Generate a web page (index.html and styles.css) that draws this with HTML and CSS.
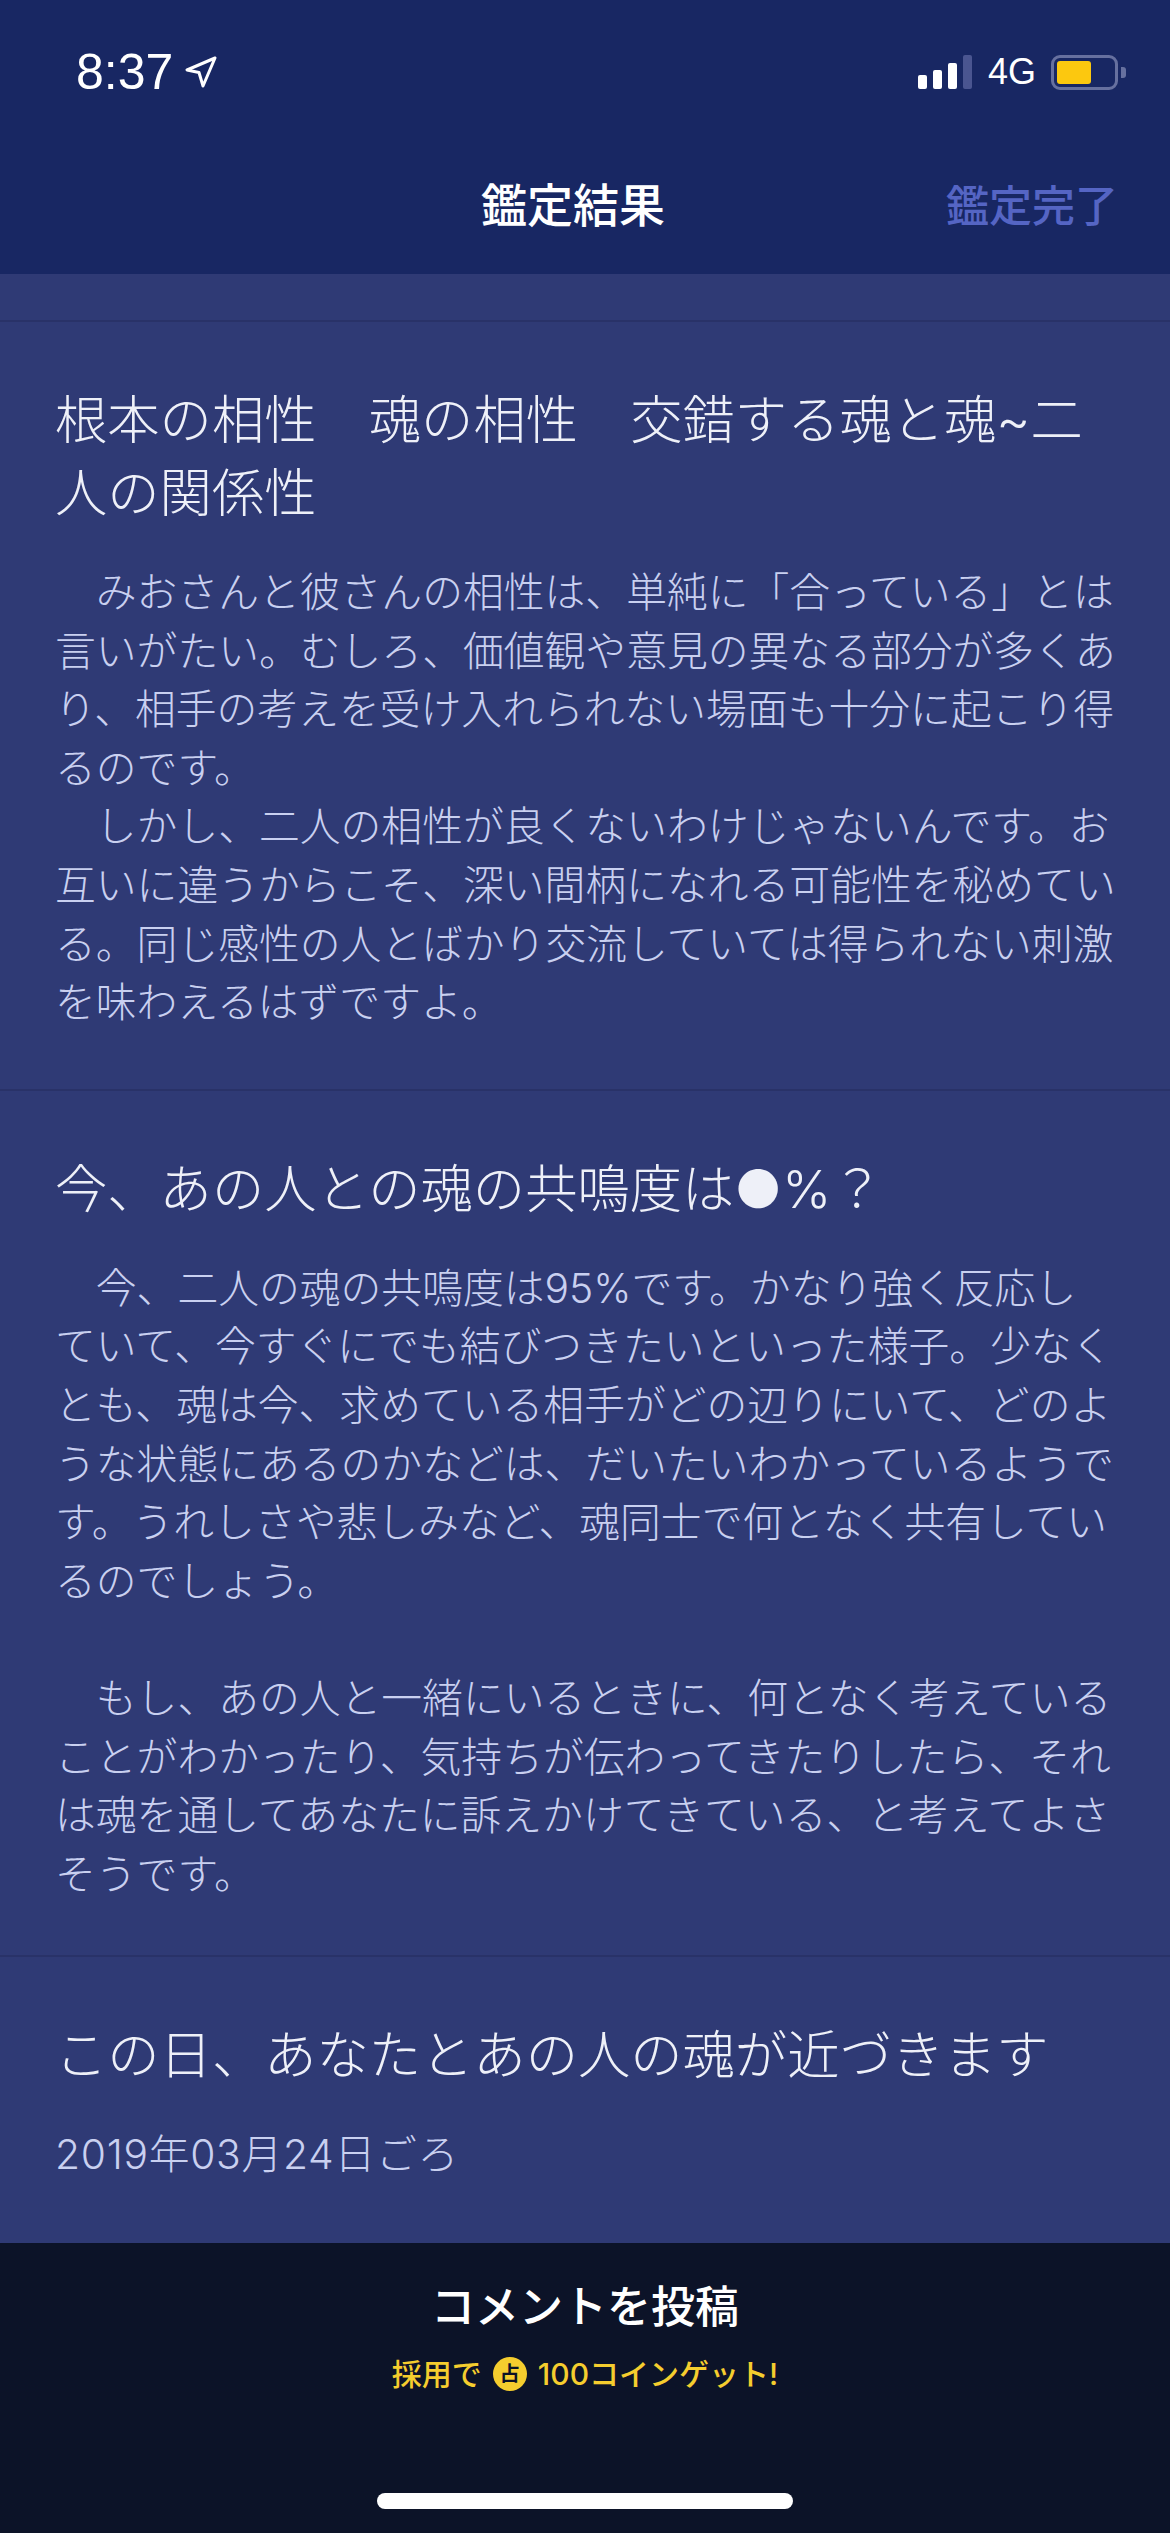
FILE: index.html
```html
<!DOCTYPE html>
<html lang="ja">
<head>
    <meta charset="UTF-8">
    <meta name="viewport" content="width=device-width, initial-scale=1.0">
    <title>鑑定結果</title>
    <link rel="stylesheet" href="styles.css">
</head>
<body>
    <div class="screen">
        <header class="top">
            <div class="status">
                <div class="status-left">
                    <span class="time">8:37</span>
                    <svg class="loc" width="32" height="32" viewBox="0 0 32 32">
                        <path d="M30 2 L2 14 L14 16.500 L18 30 Z" fill="none" stroke="#ffffff" stroke-width="3" stroke-linejoin="round"/>
                    </svg>
                </div>
                <div class="status-right">
                    <div class="bars">
                        <span class="bar bar-1"></span>
                        <span class="bar bar-2"></span>
                        <span class="bar bar-3"></span>
                        <span class="bar bar-4"></span>
                    </div>
                    <span class="net">4G</span>
                    <div class="battery">
                        <div class="battery-body"><span class="battery-level"></span></div>
                        <span class="battery-cap"></span>
                    </div>
                </div>
            </div>
            <div class="nav">
                <h1 class="nav-title">鑑定結果</h1>
                <span class="nav-done">鑑定完了</span>
            </div>
        </header>

        <main class="result">
            <section class="block">
                <h2 class="block-title">根本の相性　魂の相性　交錯する魂と魂~二<br>人の関係性</h2>
                <p class="block-text">　みおさんと彼さんの相性は、単純に「合っている」とは<br>言いがたい。むしろ、価値観や意見の異なる部分が多くあ<br>り、相手の考えを受け入れられない場面も十分に起こり得<br>るのです。<br>　しかし、二人の相性が良くないわけじゃないんです。お<br>互いに違うからこそ、深い間柄になれる可能性を秘めてい<br>る。同じ感性の人とばかり交流していては得られない刺激<br>を味わえるはずですよ。</p>
            </section>
            <section class="block">
                <h2 class="block-title">今、あの人との魂の共鳴度は●%？</h2>
                <p class="block-text">　今、二人の魂の共鳴度は95%です。かなり強く反応し<br>ていて、今すぐにでも結びつきたいといった様子。少なく<br>とも、魂は今、求めている相手がどの辺りにいて、どのよ<br>うな状態にあるのかなどは、だいたいわかっているようで<br>す。うれしさや悲しみなど、魂同士で何となく共有してい<br>るのでしょう。<br><br>　もし、あの人と一緒にいるときに、何となく考えている<br>ことがわかったり、気持ちが伝わってきたりしたら、それ<br>は魂を通してあなたに訴えかけてきている、と考えてよさ<br>そうです。</p>
            </section>
            <section class="block">
                <h2 class="block-title">この日、あなたとあの人の魂が近づきます</h2>
                <p class="block-text block-date">2019年03月24日ごろ</p>
            </section>
        </main>

        <footer class="bottom">
            <div class="post-label">コメントを投稿</div>
            <div class="post-note">
                <span>採用で</span>
                <span class="coin">占</span>
                <span>100コインゲット!</span>
            </div>
            <div class="home-bar"></div>
        </footer>
    </div>
</body>
</html>
```

FILE: styles.css
```css
:root {
    --header-color: #182763;
    --page-color: #2f3a75;
    --line-color: #293268;
    --footer-color: #0c1328;
    --title-color: #eef0f8;
    --text-color: #c9d0f0;
    --link-color: #5565c4;
    --gold-color: #f5cd2e;
}

* {
    box-sizing: border-box;
}

body {
    margin: 0;
    background-color: var(--page-color);
    font-family: "Inter", "Noto Sans CJK JP", "Liberation Sans", sans-serif;
}

.screen {
    width: 1170px;
    height: 2533px;
    display: flex;
    flex-direction: column;
    overflow: hidden;
}

/* status bar and title */
.top {
    height: 274px;
    flex-shrink: 0;
    background-color: var(--header-color);
    color: #ffffff;
}

.status {
    height: 140px;
    padding: 50px 44px 0 76px;
    display: flex;
    justify-content: space-between;
    align-items: flex-start;
}

.status-left {
    display: flex;
    align-items: center;
    gap: 12px;
}

.time {
    font-family: "Liberation Sans", sans-serif;
    font-size: 50px;
    line-height: 44px;
}

.status-right {
    display: flex;
    align-items: center;
    height: 44px;
}

.bars {
    display: flex;
    align-items: flex-end;
    gap: 6px;
    height: 34px;
}

.bar {
    width: 9px;
    border-radius: 2px;
    background-color: #ffffff;
}

.bar-1 { height: 14px; }
.bar-2 { height: 19px; }
.bar-3 { height: 26px; }
.bar-4 { height: 34px; background-color: #4a5590; }

.net {
    margin-left: 16px;
    font-family: "Liberation Sans", sans-serif;
    font-size: 36px;
    line-height: 44px;
}

.battery {
    margin-left: 15px;
    display: flex;
    align-items: center;
    gap: 3px;
}

.battery-body {
    width: 67px;
    height: 35px;
    padding: 3px;
    border: 3px solid #66709f;
    border-radius: 9px;
}

.battery-level {
    display: block;
    width: 34px;
    height: 100%;
    border-radius: 3px;
    background-color: #fcc80f;
}

.battery-cap {
    width: 5px;
    height: 11px;
    border-radius: 0 3px 3px 0;
    background-color: #66709f;
}

.nav {
    position: relative;
    height: 134px;
    padding: 31px 24px 0 0;
    text-align: center;
}

.nav-title {
    margin: 0;
    font-size: 46px;
    font-weight: 500;
    line-height: 68px;
}

.nav-done {
    position: absolute;
    top: 32px;
    right: 52px;
    font-size: 43px;
    font-weight: 500;
    line-height: 68px;
    color: var(--link-color);
}

/* result text */
.result {
    flex: 1;
    padding-top: 46px;
    background-color: var(--page-color);
}

.block {
    padding: 62px 55px 52px;
    border-top: 2px solid var(--line-color);
}

.block:first-child {
    padding-bottom: 57px;
}

.block-title {
    margin: 0 0 33px;
    font-size: 52.300px;
    font-weight: 300;
    line-height: 73px;
    white-space: nowrap;
    color: var(--title-color);
}

.block-text {
    margin: 0;
    font-size: 40.800px;
    font-weight: 300;
    line-height: 58.600px;
    white-space: nowrap;
    color: var(--text-color);
}

.block-date {
    letter-spacing: 0.700px;
}

/* comment button */
.bottom {
    position: relative;
    height: 290px;
    flex-shrink: 0;
    padding-top: 31px;
    background-color: var(--footer-color);
    text-align: center;
}

.post-label {
    font-size: 44px;
    font-weight: 500;
    line-height: 66px;
    color: #ffffff;
}

.post-note {
    margin-top: 14px;
    display: flex;
    justify-content: center;
    align-items: center;
    gap: 11px;
    font-size: 30px;
    font-weight: 500;
    line-height: 40px;
    color: var(--gold-color);
}

.coin {
    width: 34px;
    height: 34px;
    border-radius: 50%;
    background-color: var(--gold-color);
    color: #0b1126;
    font-size: 20px;
    font-weight: 700;
    line-height: 34px;
}

.home-bar {
    position: absolute;
    left: 50%;
    bottom: 24px;
    width: 416px;
    height: 16px;
    margin-left: -208px;
    border-radius: 8px;
    background-color: #ffffff;
}
```
